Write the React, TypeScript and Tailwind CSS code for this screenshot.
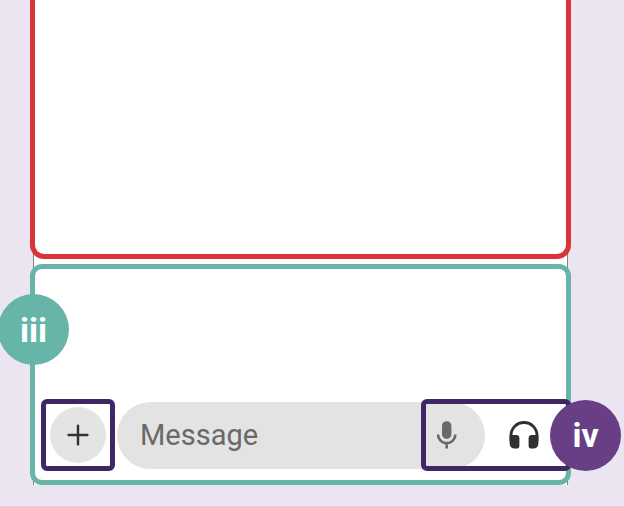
import React from "react";

function PlusIcon() {
  return (
    <svg width="22" height="22" viewBox="0 0 22 22" fill="none" stroke="#303030" strokeWidth="2.4" strokeLinecap="round" aria-hidden="true">
      <path d="M11 1.6v18.8M1.6 11h18.8" />
    </svg>
  );
}

function MicIcon() {
  return (
    <svg width="20" height="28" viewBox="0 0 20 28" fill="none" aria-hidden="true">
      <rect x="5" y="0.2" width="9.4" height="17.8" rx="4.700" fill="#696969" />
      <path d="M1 13.4a8.7 8.7 0 0 0 17.4 0M9.700 22.200v5.400" stroke="#696969" strokeWidth="2.6" />
    </svg>
  );
}

function HeadphonesIcon() {
  return (
    <svg width="30" height="28" viewBox="0 0 30 28" fill="none" aria-hidden="true">
      <path d="M2 20v-5.500a13 13 0 0 1 26 0V20" stroke="#303030" strokeWidth="2.8" />
      <path
        d="M.6 14h6.600a3.200 3.200 0 0 1 3.200 3.200v7.200a3.200 3.200 0 0 1-3.200 3.200H5.600a5 5 0 0 1-5-5zM29.400 14h-6.600a3.200 3.200 0 0 0-3.200 3.200v7.200a3.200 3.200 0 0 0 3.200 3.200h1.600a5 5 0 0 0 5-5z"
        fill="#303030"
      />
    </svg>
  );
}

function Badge({ label, className }: { label: string; className: string }) {
  return (
    <span
      className={`absolute flex size-[71px] items-center justify-center rounded-full font-[Roboto,sans-serif] text-[34px] leading-10 font-bold text-white ${className}`}
    >
      {label}
    </span>
  );
}

export default function App() {
  return (
    <main className="min-h-screen overflow-hidden bg-[#ebe5f1] pr-14 pb-[22px] pl-[33px]">
      <div className="border-x border-[#858188] bg-white">
        <section aria-label="Conversation" className="-mx-1 h-[259px] rounded-b-[14px] border-[5px] border-t-0 border-[#da3438] bg-white" />
        <section aria-label="Message composer" className="relative -mx-1 mt-[5px] rounded-xl border-[5px] border-[#67b5a8] bg-white pt-[130px] pb-[9px]">
          <Badge label="iii" className="top-[25px] -left-[37px] bg-[#67b5a8]" />
          <form className="relative flex items-center pl-1.5">
            <div className="flex h-[72px] w-[74px] shrink-0 items-center justify-center rounded-md border-[5px] border-[#3f2765]">
              <button type="button" aria-label="Add attachment" className="flex size-14 items-center justify-center rounded-full bg-[#e4e4e3]">
                <PlusIcon />
              </button>
            </div>
            <div className="ml-0.5 flex h-[67px] min-w-0 flex-1 items-center rounded-full bg-[#e3e3e3] pr-7 pl-[23px]">
              <input
                type="text"
                aria-label="Message"
                placeholder="Message"
                className="min-w-0 flex-1 bg-transparent font-[Roboto,sans-serif] text-[29px] leading-9 text-[#696969] outline-none placeholder:text-[#696969] placeholder:opacity-100"
              />
              <button type="button" aria-label="Record voice message">
                <MicIcon />
              </button>
            </div>
            <button type="button" aria-label="Start audio" className="flex w-[81px] shrink-0 justify-center pr-1">
              <HeadphonesIcon />
            </button>
            <div className="pointer-events-none absolute -right-[5px] h-[72px] w-[150px] rounded-md border-[5px] border-[#3f2765]" />
            <Badge label="iv" className="-right-[55px] bg-[#683f85]" />
          </form>
        </section>
      </div>
    </main>
  );
}
